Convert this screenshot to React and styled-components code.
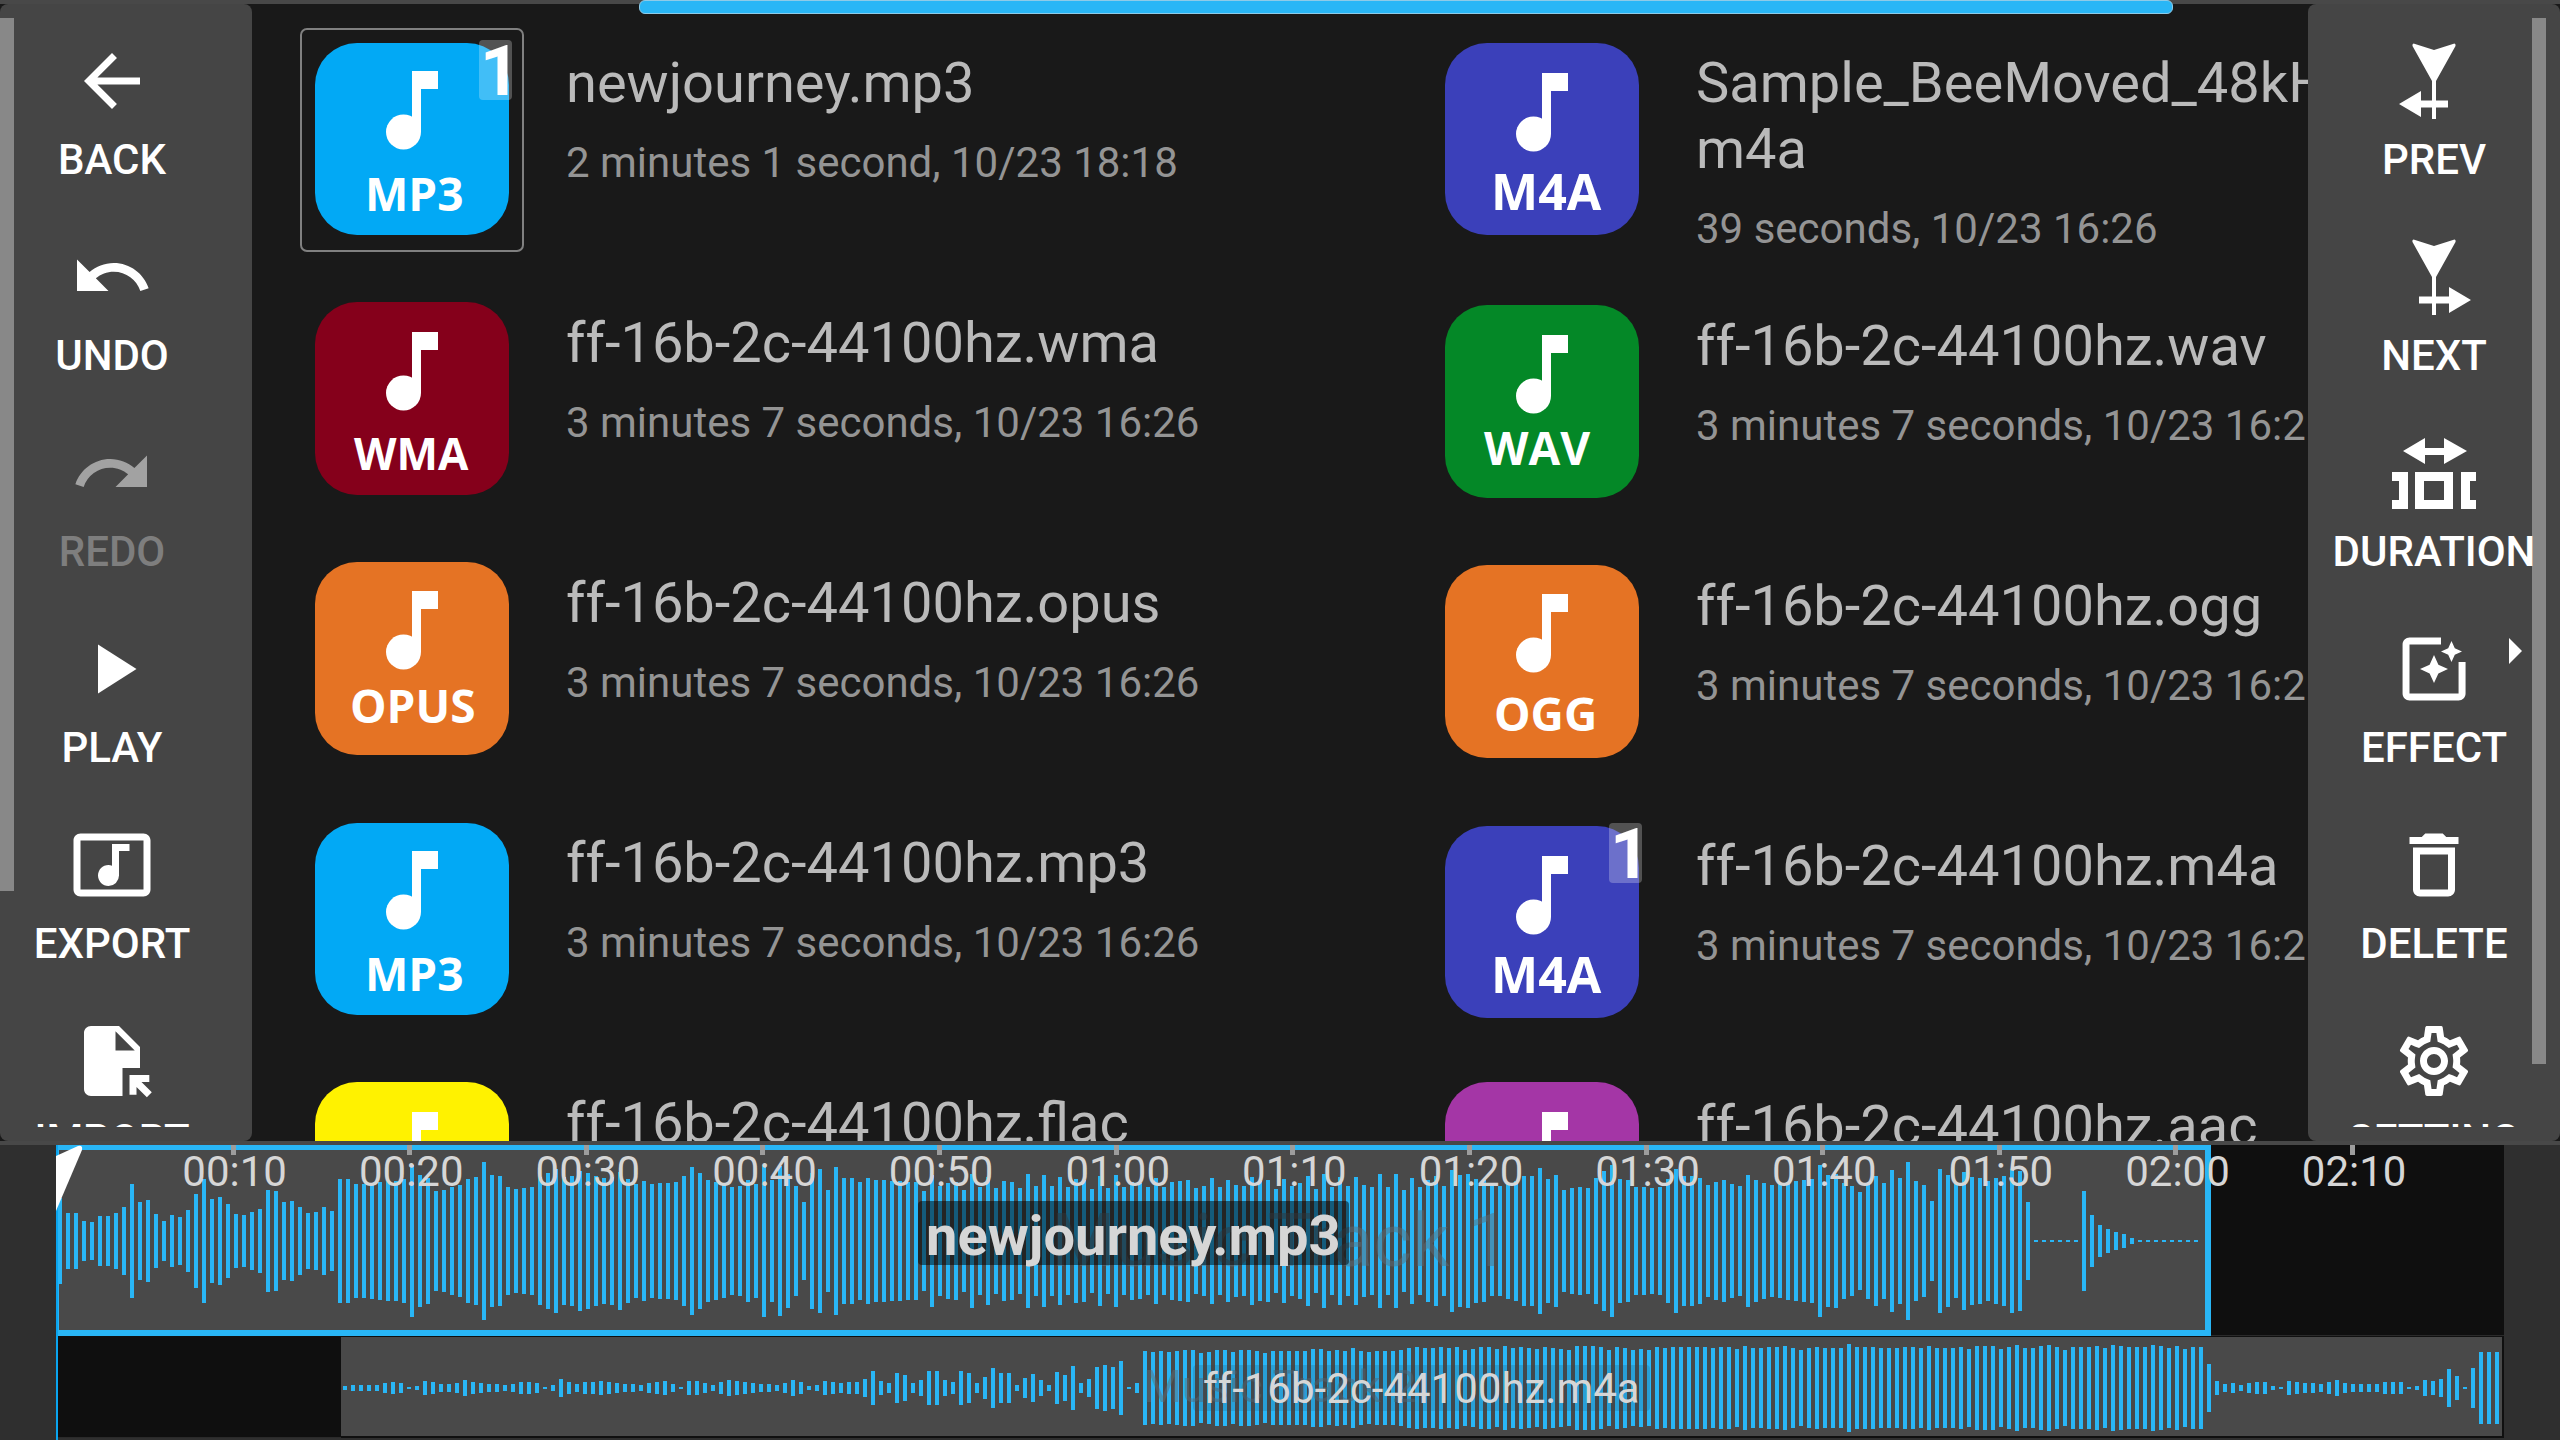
import React, { useState } from 'react';
import styled, { createGlobalStyle, css } from 'styled-components';
import {
  MdArrowBack,
  MdUndo,
  MdRedo,
  MdPlayArrow,
  MdMusicVideo,
  MdFileOpen,
  MdPhotoFilter,
  MdDeleteOutline,
  MdOutlineSettings,
} from 'react-icons/md';

const COLOR = {
  BACKGROUND: '#191919',
  PANEL: '#454545',
  DIVIDER: '#484848',
  THUMB: '#888888',
  ACCENT: '#29b6f6',
  TITLE: '#bababa',
  SUBTITLE: '#949494',
  CLIP: '#494949',
  GUTTER: '#2f2f2f',
  LANE: '#0f0f0f',
}

const GlobalStyle = createGlobalStyle`
  * {
    box-sizing: border-box;
  }

  body {
    margin: 0;
    background: ${COLOR.BACKGROUND};
    font-family: Roboto, 'Noto Sans', sans-serif;
    overflow: hidden;
  }
`

const Page = styled.div`
  display: grid;
  grid-template-rows: minmax(0, 1fr) 299px;
  height: 100vh;
`

const Workspace = styled.main`
  position: relative;
  display: grid;
  grid-template-columns: 252px minmax(0, 1fr) 252px;
  grid-template-rows: minmax(0, 1fr);
  border-top: 4px solid ${COLOR.DIVIDER};
`

/* ---------- side panels ---------- */

const Panel = styled.nav`
  position: relative;
  z-index: 1;
  grid-row: 1;
  grid-column: ${({ $side }) => ($side === 'left' ? 1 : 3)};
  padding: 14px ${({ $side }) => ($side === 'left' ? '28px 14px 0' : '14px')};
  border-radius: 8px;
  background: ${COLOR.PANEL};
`

const PanelScroll = styled.div`
  position: relative;
  z-index: 1;
  height: 100%;
  overflow: hidden;
`

const Thumb = styled.div`
  position: absolute;
  top: 14px;
  ${({ $side }) => ($side === 'left' ? 'left: 0;' : 'right: 14px;')}
  width: 14px;
  height: ${({ $length }) => $length};
  background: ${COLOR.THUMB};
`

const ToolButton = styled.button`
  position: relative;
  display: flex;
  flex-direction: column;
  align-items: center;
  gap: 12px;
  width: 100%;
  height: 196px;
  padding: 21px 0 0;
  border: 0;
  background: none;
  color: #fff;
  font: 500 42px/49px Roboto, sans-serif;
  white-space: nowrap;
  cursor: pointer;

  svg {
    flex: none;
    width: 84px;
    height: 84px;
  }

  &:disabled {
    color: #7e7e7e;
    cursor: default;

    svg {
      color: #a2a2a2;
    }
  }
`

const SubmenuArrow = styled.span`
  position: absolute;
  top: 32px;
  right: 24px;
  border: solid transparent;
  border-width: 13px 0 13px 13px;
  border-left-color: #fff;
`

/* ---------- file list ---------- */

const FileList = styled.section`
  grid-row: 1;
  grid-column: 2 / 4;
  display: grid;
  grid-template-columns: 1fr 1fr;
  padding: 24px 0 0 48px;
  overflow: hidden;
`

const FileColumn = styled.ul`
  margin: 0;
  padding: 0;
  list-style: none;
`

const FileRow = styled.li`
  display: flex;
  gap: 42px;
  padding-bottom: 36px;
`

const Cover = styled.div`
  position: relative;
  flex: none;
  width: 224px;
  height: 224px;
  border: 2px solid ${({ $selected }) => ($selected ? '#808080' : 'transparent')};
  border-radius: 7px;

  > svg {
    display: block;
    margin: -2px;
  }
`

const UseCount = styled.span`
  position: absolute;
  top: 10px;
  right: 10px;
  width: 33px;
  height: 60px;
  padding-left: 1px;
  border-radius: 4px;
  background: rgba(255, 255, 255, 0.25);
  color: #fff;
  font: 700 70px/62px Roboto, sans-serif;
`

const FileText = styled.div`
  padding: 22px 0 2px;
  white-space: pre;
`

const FileName = styled.h2`
  margin: 0;
  color: ${COLOR.TITLE};
  font-size: 56px;
  font-weight: 400;
  line-height: 66px;
`

const FileInfo = styled.p`
  margin: 22px 0 0;
  color: ${COLOR.SUBTITLE};
  font-size: 42px;
  line-height: 49px;
`

const PageIndicator = styled.div`
  position: absolute;
  z-index: 2;
  top: -4px;
  left: 639px;
  right: 387px;
  height: 14px;
  border: 1px solid #8ecbe8;
  border-radius: 6px;
  background: ${COLOR.ACCENT};
`

/* ---------- timeline ---------- */

const Timeline = styled.section`
  position: relative;
  display: grid;
  grid-template-rows: 191px 102px;
  align-content: start;
  padding: 0 56px;
  border-top: 4px solid ${COLOR.DIVIDER};
  background: ${COLOR.GUTTER};
`

const Track = styled.div`
  display: grid;
  grid-template-columns: minmax(0, 1fr);
  grid-template-rows: minmax(0, 1fr);
  align-items: center;
  background: ${COLOR.LANE};
  box-shadow: inset 0 -1px #2a2a2a;

  > * {
    grid-area: 1 / 1;
  }
`

const Watermark = styled.span`
  position: relative;
  justify-self: center;
  color: rgba(92, 110, 122, 0.5);
  font-size: ${({ $size }) => $size};
  line-height: 1;
`

const Clip = styled.div`
  display: grid;
  grid-template-rows: minmax(0, 1fr);
  align-items: center;
  height: 100%;
  background: ${COLOR.CLIP};

  > * {
    grid-area: 1 / 1;
  }

  ${({ $selected }) => $selected ? css`
    &::after {
      content: '';
      grid-area: 1 / 1;
      z-index: 1;
      align-self: stretch;
      border: solid ${COLOR.ACCENT};
      border-width: 5px 6px 6px 3px;
    }
  ` : css`
    padding-top: 3px;
    border: solid #101010;
    border-width: 1px 2px 2px 0;
  `}
`

const ClipName = styled.span`
  z-index: 2;
  justify-self: center;
  border-radius: 4px;
  color: #d6d6d6;

  ${({ $selected }) => $selected ? css`
    margin-bottom: 15px;
    padding: 6px 8px 0;
    background: rgba(0, 0, 0, 0.5);
    font-size: 56px;
    font-weight: 700;
    line-height: 58px;
  ` : css`
    padding: 2px 10px 0;
    background: rgba(40, 70, 90, 0.2);
    font-size: 42px;
    font-weight: 400;
    line-height: 44px;
  `}
`

const Ruler = styled.div`
  position: absolute;
  z-index: 3;
  inset: 0 56px auto;
`

const Mark = styled.span`
  position: absolute;
  top: 0;
  display: flex;
  flex-direction: column;
  align-items: center;
  width: 120px;
  margin-left: -58px;
  color: #d6d6d6;
  font-size: 42px;
  line-height: 34px;

  &::before {
    content: '';
    width: 5px;
    height: 10px;
    margin-right: 3px;
    background: #9d9d9d;
  }
`

const Playhead = styled.div`
  position: absolute;
  z-index: 4;
  top: 0;
  bottom: 0;
  left: 56px;
  border-left: 2px solid #0aa5f0;

  svg {
    display: block;
    margin-left: -2px;
  }
`

const TOTAL = 138.6;
const BAR_STEP = 8;

// half height in px of each bar
const JOURNEY_PEAKS = [
  43, 28, 28, 20, 19, 25, 25, 28, 34, 57, 39, 41, 27, 20, 26, 24, 31, 47, 62, 42,
  44, 37, 27, 26, 29, 32, 51, 50, 39, 40, 34, 28, 29, 34, 30, 62, 62, 57, 57, 58,
  59, 60, 60, 62, 76, 66, 63, 50, 51, 54, 56, 62, 64, 79, 66, 65, 54, 52, 53, 54,
  64, 68, 72, 64, 65, 70, 68, 65, 63, 64, 69, 62, 57, 60, 57, 58, 58, 59, 65, 74,
  68, 61, 59, 57, 54, 55, 61, 57, 76, 61, 75, 67, 55, 39, 68, 72, 51, 74, 63, 63,
  59, 63, 61, 61, 60, 60, 59, 59, 50, 66, 55, 58, 59, 51, 67, 54, 64, 53, 60, 59,
  53, 67, 55, 66, 55, 64, 54, 62, 61, 52, 65, 53, 66, 54, 59, 58, 54, 63, 54, 59,
  60, 61, 53, 55, 63, 54, 61, 56, 55, 64, 60, 61, 52, 62, 55, 58, 65, 52, 67, 54,
  64, 55, 64, 56, 54, 67, 54, 67, 51, 63, 54, 61, 65, 55, 71, 66, 67, 62, 61, 55,
  55, 58, 60, 65, 65, 73, 62, 66, 51, 53, 54, 53, 63, 70, 76, 62, 61, 54, 54, 53,
  54, 62, 72, 65, 65, 63, 56, 59, 61, 57, 55, 66, 61, 58, 56, 57, 59, 60, 61, 62,
  76, 66, 67, 58, 55, 49, 58, 65, 58, 71, 63, 79, 60, 56, 40, 72, 66, 57, 69, 64,
  63, 60, 63, 65, 72, 70, 39, 1, 1, 1, 1, 1, 1, 50, 26, 16, 12, 9, 7, 3,
  1, 1, 1, 1, 1, 1, 1, 1,
]

const M4A_PEAKS = [
  2, 3, 3, 3, 3, 5, 6, 5, 1, 2, 7, 6, 4, 4, 5, 8, 6, 5, 4, 4,
  3, 4, 6, 6, 5, 1, 3, 9, 6, 4, 6, 6, 7, 6, 5, 4, 4, 3, 5, 6,
  7, 4, 1, 7, 7, 5, 3, 6, 8, 7, 6, 5, 4, 4, 3, 5, 8, 6, 2, 3,
  7, 6, 5, 6, 6, 9, 17, 7, 5, 15, 13, 5, 8, 17, 17, 8, 6, 17, 15, 5,
  11, 20, 15, 15, 3, 10, 14, 8, 3, 16, 13, 22, 5, 9, 21, 23, 21, 27, 1, 5,
  37, 36, 37, 36, 37, 38, 38, 35, 36, 38, 38, 36, 38, 38, 37, 35, 37, 37, 37, 37,
  37, 39, 39, 37, 38, 37, 40, 37, 36, 37, 37, 37, 38, 40, 41, 40, 40, 41, 40, 41,
  38, 39, 41, 41, 39, 42, 40, 41, 40, 39, 41, 40, 39, 38, 42, 42, 42, 41, 38, 41,
  40, 38, 39, 38, 41, 40, 41, 41, 41, 41, 41, 40, 41, 41, 39, 42, 40, 40, 41, 41,
  42, 40, 38, 40, 41, 40, 40, 40, 44, 41, 41, 41, 40, 40, 40, 41, 41, 40, 42, 40,
  40, 40, 41, 39, 42, 42, 42, 39, 41, 43, 40, 40, 42, 43, 41, 38, 41, 41, 41, 42,
  40, 43, 42, 41, 41, 41, 43, 42, 40, 42, 39, 41, 41, 24, 7, 4, 5, 3, 5, 6,
  6, 2, 1, 7, 6, 5, 5, 4, 6, 8, 5, 4, 4, 4, 4, 6, 6, 6, 1, 2,
  8, 7, 9, 19, 12, 1, 20, 36, 36, 36,
]

const FORMAT = {
  mp3: { color: '#02a9f5', top: 15, noteY: 43, x: 65, y: 183, size: 46 },
  wma: { color: '#85001b', top: 14, noteY: 44, x: 54, y: 182, size: 44 },
  opus: { color: '#e57324', top: 14, noteY: 43, x: 50, y: 175, size: 46 },
  flac: { color: '#fff200', top: 14, noteY: 44, x: 54, y: 182, size: 44 },
  m4a: { color: '#3b40ba', top: 15, noteY: 45, x: 61, y: 182, size: 50 },
  wav: { color: '#048827', top: 14, noteY: 44, x: 54, y: 174, size: 46 },
  ogg: { color: '#e57324', top: 14, noteY: 43, x: 64, y: 180, size: 46 },
  aac: { color: '#a436a6', top: 11, noteY: 41, x: 58, y: 182, size: 46 },
}

const LONG = '3 minutes 7 seconds, 10/23 16:26'

const FILE_COLUMNS = [
  [
    { name: 'newjourney.mp3', info: '2 minutes 1 second, 10/23 18:18', type: 'mp3', count: 1, selected: true },
    { name: 'ff-16b-2c-44100hz.wma', info: LONG, type: 'wma' },
    { name: 'ff-16b-2c-44100hz.opus', info: LONG, type: 'opus' },
    { name: 'ff-16b-2c-44100hz.mp3', info: LONG, type: 'mp3' },
    { name: 'ff-16b-2c-44100hz.flac', info: LONG, type: 'flac' },
  ],
  [
    { name: 'Sample_BeeMoved_48kHz.\nm4a', info: '39 seconds, 10/23 16:26', type: 'm4a' },
    { name: 'ff-16b-2c-44100hz.wav', info: LONG, type: 'wav' },
    { name: 'ff-16b-2c-44100hz.ogg', info: LONG, type: 'ogg' },
    { name: 'ff-16b-2c-44100hz.m4a', info: LONG, type: 'm4a', count: 1 },
    { name: 'ff-16b-2c-44100hz.aac', info: LONG, type: 'aac' },
  ],
]

const MarkerShape = () => (
  <path d='M21.5 4.5 L42 11 L62.5 4.5 Q64 5 63.5 7 L44 42 V80 H40 V42 L20.5 7 Q20 5 21.5 4.5 Z' />
)

const PrevIcon = () => (
  <svg viewBox='0 0 84 84' fill='currentColor' aria-hidden='true'>
    <MarkerShape />
    <path d='M7 65 L29 52 V61.5 H56 V68.5 H29 V78 Z' />
  </svg>
)

const NextIcon = () => (
  <svg viewBox='0 0 84 84' fill='currentColor' aria-hidden='true'>
    <MarkerShape />
    <path d='M79 65 L57 52 V61.5 H27 V68.5 H57 V78 Z' />
  </svg>
)

const DurationIcon = () => (
  <svg viewBox='0 0 84 84' fill='currentColor' aria-hidden='true'>
    <path d='M11 20 L33 7 V17 H52 V7 L75 20 L52 33 V24 H33 V33 Z' />
    <path d='M0 41 H16 V78 H0 V69 H7 V50 H0 Z' />
    <path fillRule='evenodd' d='M23 41 H61 V78 H23 Z M32 50 V69 H52 V50 Z' />
    <path d='M84 41 H69 V78 H84 V69 H78 V50 H84 Z' />
  </svg>
)

const TOOLS_LEFT = [
  { label: 'BACK', Icon: MdArrowBack },
  { label: 'UNDO', Icon: MdUndo },
  { label: 'REDO', Icon: MdRedo, disabled: true },
  { label: 'PLAY', Icon: MdPlayArrow },
  { label: 'EXPORT', Icon: MdMusicVideo },
  { label: 'IMPORT', Icon: MdFileOpen },
]

const TOOLS_RIGHT = [
  { label: 'PREV', Icon: PrevIcon },
  { label: 'NEXT', Icon: NextIcon },
  { label: 'DURATION', Icon: DurationIcon },
  { label: 'EFFECT', Icon: MdPhotoFilter, hasSubmenu: true },
  { label: 'DELETE', Icon: MdDeleteOutline },
  { label: 'SETTING', Icon: MdOutlineSettings },
]

const TRACKS = [
  { title: 'Music Track 1', name: 'newjourney.mp3', start: 0, end: 122, peaks: JOURNEY_PEAKS, height: 170 },
  { title: 'Music Track 2', name: 'ff-16b-2c-44100hz.m4a', start: 16.12, end: TOTAL, peaks: M4A_PEAKS, height: 96 },
]

const MARKS = Array.from({ length: 13 }, (_, i) => (i + 1) * 10)

function formatTime(sec) {
  const pad = n => String(n).padStart(2, '0')
  return `${pad(Math.floor(sec / 60))}:${pad(sec % 60)}`
}

const ToolPanel = ({ side, tools, length }) => (
  <Panel $side={side}>
    <Thumb $side={side} $length={length} />
    <PanelScroll>
      {tools.map(({ label, Icon, disabled, hasSubmenu }) => (
        <ToolButton key={label} type='button' disabled={disabled}>
          <Icon />
          {label}
          {hasSubmenu && <SubmenuArrow />}
        </ToolButton>
      ))}
    </PanelScroll>
  </Panel>
)

const FormatTile = ({ type }) => {
  const { color, top, noteY, x, y, size } = FORMAT[type]
  return (
    <svg width='224' height='224' viewBox='0 0 224 224'>
      <rect x='15' y={top} width='194' height={207 - top} rx='42' fill={color} />
      <g fill='#fff'>
        <path d={`M112 ${noteY} h26 v18 h-17 v43 h-9 z`} />
        <circle cx='103.5' cy={noteY + 61} r='17.5' />
        <text x={x} y={y} fontFamily='Open Sans, Noto Sans, sans-serif' fontWeight='700' fontSize={size}>
          {type.toUpperCase()}
        </text>
      </g>
    </svg>
  )
}

const Wave = ({ peaks, height }) => (
  <svg width={peaks.length * BAR_STEP} height={height} fill={COLOR.ACCENT} aria-hidden='true'>
    {peaks.map((peak, i) => (
      <rect key={i} x={i * BAR_STEP + 2} y={height / 2 - peak} width='4' height={peak * 2} />
    ))}
  </svg>
)

const App = () => {
  const [selectedTrack] = useState(0);

  return (
    <Page>
      <GlobalStyle />
      <Workspace>
        <ToolPanel side='left' tools={TOOLS_LEFT} length='873px' />
        <FileList>
          {FILE_COLUMNS.map((files, i) => (
            <FileColumn key={i}>
              {files.map(file => (
                <FileRow key={file.name}>
                  <Cover $selected={file.selected}>
                    <FormatTile type={file.type} />
                    {file.count && <UseCount>{file.count}</UseCount>}
                  </Cover>
                  <FileText>
                    <FileName>{file.name}</FileName>
                    <FileInfo>{file.info}</FileInfo>
                  </FileText>
                </FileRow>
              ))}
            </FileColumn>
          ))}
        </FileList>
        <ToolPanel side='right' tools={TOOLS_RIGHT} length='1046px' />
        <PageIndicator />
      </Workspace>

      <Timeline>
        {TRACKS.map((track, i) => {
          const selected = i === selectedTrack
          return (
            <Track key={track.title}>
              <Clip
                $selected={selected}
                style={{
                  marginLeft: `${track.start / TOTAL * 100}%`,
                  width: `${(track.end - track.start) / TOTAL * 100}%`,
                }}
              >
                <Wave peaks={track.peaks} height={track.height} />
                <ClipName $selected={selected}>{track.name}</ClipName>
              </Clip>
              <Watermark $size={selected ? '74px' : '44px'}>{track.title}</Watermark>
            </Track>
          )
        })}
        <Ruler>
          {MARKS.map(sec => (
            <Mark key={sec} style={{ left: `${sec / TOTAL * 100}%` }}>{formatTime(sec)}</Mark>
          ))}
        </Ruler>
        <Playhead>
          <svg width='28' height='66' aria-hidden='true'>
            <path d='M0 11 L22 1 Q27 0 26 5 L0 66 Z' fill='#fff' />
          </svg>
        </Playhead>
      </Timeline>
    </Page>
  )
}

export default App
